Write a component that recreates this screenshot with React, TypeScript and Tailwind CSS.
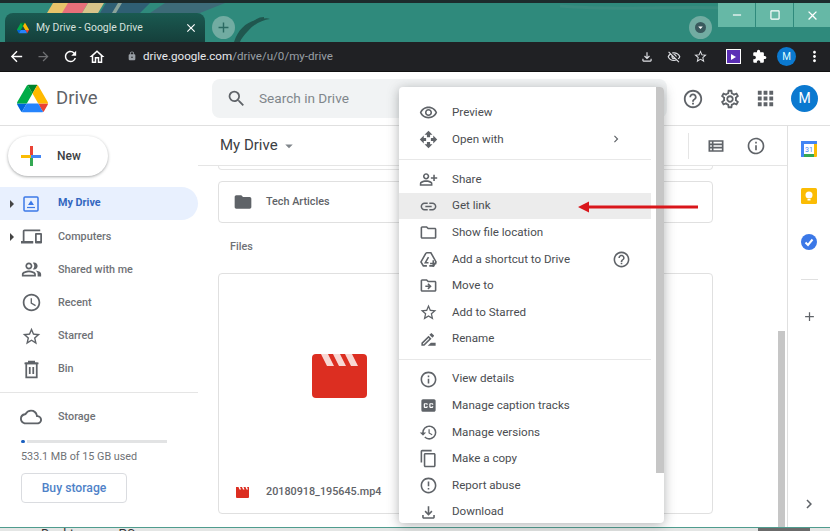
import {
  MdAccessTime, MdArrowBack, MdArrowForward, MdArrowDropDown, MdChevronRight, MdClose, MdContentCopy,
  MdErrorOutline, MdExtension, MdHelpOutline, MdHistory, MdInfoOutline, MdLink, MdLock, MdMoreVert,
  MdOpenWith, MdOutlineCloud, MdOutlineDevices, MdOutlineDriveFileMove, MdOutlineDriveFileRenameOutline,
  MdOutlineFileDownload, MdOutlineFolder, MdOutlineHome, MdOutlinePeopleAlt, MdOutlinePersonAddAlt,
  MdOutlineRemoveRedEye, MdOutlineSettings, MdOutlineViewList, MdRefresh, MdSearch, MdStarBorder,
  MdApps, MdClosedCaption, MdFolder, MdAdd, MdCropSquare, MdRemove, MdOutlineVisibilityOff,
} from "react-icons/md";
import type { IconType } from "react-icons";

function ShortcutIcon({ size = 19, className }: { size?: number; className?: string }) {
  return (
    <svg width={size} height={size} viewBox="0 0 24 24" fill="none" stroke="currentColor" strokeWidth="2" className={className}>
      <path d="M9 3.500H15L21.500 15L18.500 20H13" />
      <path d="M9 3.500L2.500 15L5.500 20H10" />
      <path d="M12 9L8 16H12" />
      <path d="M18 13V21M14 17H22" />
    </svg>
  );
}

function BinIcon({ size = 21, className }: { size?: number; className?: string }) {
  return (
    <svg width={size} height={size} viewBox="0 0 24 24" fill="none" stroke="currentColor" strokeWidth="2" className={className}>
      <path d="M4 5H20M9 5V3H15V5" />
      <rect x="6" y="5" width="12" height="16" />
      <path d="M10 9V17M14 9V17" />
    </svg>
  );
}

const menuGroups: { label: string; icon: IconType | typeof ShortcutIcon; extra?: "chevron" | "help"; active?: boolean }[][] = [
  [
    { label: "Preview", icon: MdOutlineRemoveRedEye },
    { label: "Open with", icon: MdOpenWith, extra: "chevron" },
  ],
  [
    { label: "Share", icon: MdOutlinePersonAddAlt },
    { label: "Get link", icon: MdLink, active: true },
    { label: "Show file location", icon: MdOutlineFolder },
    { label: "Add a shortcut to Drive", icon: ShortcutIcon, extra: "help" },
    { label: "Move to", icon: MdOutlineDriveFileMove },
    { label: "Add to Starred", icon: MdStarBorder },
    { label: "Rename", icon: MdOutlineDriveFileRenameOutline },
  ],
  [
    { label: "View details", icon: MdInfoOutline },
    { label: "Manage caption tracks", icon: MdClosedCaption },
    { label: "Manage versions", icon: MdHistory },
    { label: "Make a copy", icon: MdContentCopy },
    { label: "Report abuse", icon: MdErrorOutline },
    { label: "Download", icon: MdOutlineFileDownload },
  ],
];

const navItems: { label: string; icon: IconType | typeof BinIcon; caret?: boolean }[] = [
  { label: "Computers", icon: MdOutlineDevices, caret: true },
  { label: "Shared with me", icon: MdOutlinePeopleAlt },
  { label: "Recent", icon: MdAccessTime },
  { label: "Starred", icon: MdStarBorder },
  { label: "Bin", icon: BinIcon },
];

function DriveLogo({ size = 16 }: { size?: number }) {
  return (
    <svg width={size} height={size} viewBox="0 0 87.3 78">
      <path d="M6.6 66.85l3.85 6.65c.8 1.4 1.95 2.5 3.3 3.3L27.5 53H0c0 1.55.4 3.1 1.2 4.5z" fill="#0066da" />
      <path d="M43.65 25L29.9 1.2c-1.35.8-2.5 1.9-3.3 3.3L1.2 48.5C.4 49.9 0 51.45 0 53h27.5z" fill="#00ac47" />
      <path d="M73.55 76.8c1.35-.8 2.5-1.9 3.3-3.3l1.6-2.75L86.1 57.5c.8-1.4 1.2-2.95 1.2-4.5H59.8l5.85 11.5z" fill="#ea4335" />
      <path d="M43.65 25L57.4 1.2C56.05.4 54.5 0 52.9 0H34.4c-1.6 0-3.15.45-4.5 1.2z" fill="#00832d" />
      <path d="M59.8 53H27.5L13.75 76.8c1.35.8 2.9 1.2 4.5 1.2h50.8c1.6 0 3.15-.45 4.5-1.2z" fill="#2684fc" />
      <path d="M73.4 26.5L60.7 4.5c-.8-1.4-1.95-2.5-3.3-3.3L43.65 25 59.8 53h27.45c0-1.55-.4-3.1-1.2-4.5z" fill="#ffba00" />
    </svg>
  );
}

function TitleBarArt() {
  return (
    <svg className="absolute inset-0" width="830" height="39" viewBox="0 0 830 39">
      <path d="M47 10L53 0H72L66 10Z" fill="#e9c46a" />
      <path d="M62 10L68 0H88L82 10Z" fill="#e8707a" />
      <path d="M82 10L88 0H104L98 10Z" fill="#d8c48a" />
      <path d="M100 10L106 0H150L140 10Z" fill="#2f5f74" />
      <path d="M112 10L118 0H122L116 10Z" fill="#8aa39a" />
      <path d="M150 10L165 0H225L200 10Z" fill="#3d6b78" />
      <path d="M234 39C238 27 245 20 256 17C262 16 266 14 270 16C262 17 254 21 248 28C244 32 241 36 240 39Z" fill="#20574f" />
      <path d="M250 23C255 18 258 15 264 15" stroke="#20574f" strokeWidth="2" fill="none" />
      <path d="M560 3C620 8 680 3 720 5" stroke="#3a8d80" strokeWidth="3" fill="none" />
    </svg>
  );
}

function ChromeBar() {
  return (
    <div className="h-[39px] bg-[#2f8a7c] relative">
      <TitleBarArt />
      <div className="absolute left-[5px] top-[10px] w-[200px] h-[29px] bg-linear-to-b from-[#1a5a51] to-[#153f3b] rounded-t-lg flex items-center pl-[12px] pr-[7px] text-[#d6e2df]">
        <DriveLogo size={12} />
        <span className="ml-[7px] text-[10.4px] flex-1">My Drive - Google Drive</span>
        <MdClose size={14} className="text-white" />
      </div>
      <div className="absolute left-[212px] top-[13px] w-[23px] h-[23px] rounded-full bg-[#72aca2] flex items-center justify-center text-[#2a6a62]">
        <MdAdd size={17} />
      </div>
      <div className="absolute left-[689px] top-[13px] w-[23px] h-[23px] rounded-full bg-[#72aca2] flex items-center justify-center">
        <div className="w-[11px] h-[11px] rounded-full bg-[#3a5a5e] flex items-center justify-center">
          <MdArrowDropDown size={11} className="text-white" />
        </div>
      </div>
      <div className="absolute right-0 top-0 h-[24px] flex gap-px text-white">
        <div className="w-[37px] bg-[#66b8a6] flex items-center justify-center"><MdRemove size={14} /></div>
        <div className="w-[37px] bg-[#66b8a6] flex items-center justify-center"><MdCropSquare size={14} /></div>
        <div className="w-[36px] bg-[#66b8a6] flex items-center justify-center"><MdClose size={15} /></div>
      </div>
    </div>
  );
}

function Toolbar() {
  return (
    <div className="h-[30px] bg-[#202124] flex items-center border-b border-[#111]">
      <div className="flex items-center text-white">
        <MdArrowBack size={17} className="ml-[8px]" />
        <MdArrowForward size={15} className="ml-[11px] text-[#6f7073]" />
        <MdRefresh size={17} className="ml-[11px]" />
        <MdOutlineHome size={18} className="ml-[9px]" />
      </div>
      <div className="ml-[21px] flex items-center flex-1 text-[11.6px]">
        <MdLock size={10} className="text-[#9aa0a6]" />
        <span className="ml-[6px] text-[#e8eaed]">drive.google.com</span>
        <span className="text-[#9aa0a6]">/drive/u/0/my-drive</span>
      </div>
      <div className="flex items-center text-[#dfe1e5]">
        <MdOutlineFileDownload size={14} className="mr-[13px]" />
        <MdOutlineVisibilityOff size={14} className="mr-[12px]" />
        <MdStarBorder size={15} className="mr-[18px]" />
        <div className="w-[15px] h-[15px] bg-[#5b2fb5] border border-white flex items-center justify-center mr-[11px]">
          <div className="w-0 h-0 border-y-[3px] border-y-transparent border-l-[5px] border-l-white" />
        </div>
        <MdExtension size={15} className="text-white mr-[10px]" />
        <div className="w-[19px] h-[19px] rounded-full bg-[#0b79d0] text-[#dff] text-[10px] flex items-center justify-center mr-[10px]">M</div>
        <MdMoreVert size={17} className="text-white mr-[7px]" />
      </div>
    </div>
  );
}

function DriveHeader() {
  return (
    <div className="h-[54px] shrink-0 bg-white border-b border-[#e0e0e0] flex items-center">
      <div className="ml-[17px]"><DriveLogo size={31} /></div>
      <span className="ml-[8px] text-[18.5px] text-[#5f6368] w-[156px]">Drive</span>
      <div className="w-[455px] h-[39px] rounded-lg bg-[#f1f3f4] flex items-center pl-[14px] text-[#80868b] text-[13.6px]">
        <MdSearch size={21} className="text-[#5f6368]" />
        <span className="ml-[12px]">Search in Drive</span>
      </div>
      <MdHelpOutline size={22} className="ml-[15px] text-[#5f6368]" />
      <MdOutlineSettings size={22} className="ml-[15px] text-[#5f6368]" />
      <MdApps size={23} className="ml-[13px] text-[#5f6368]" />
      <div className="ml-[14px] w-[27px] h-[27px] rounded-full bg-[#0b79d0] text-white text-[14px] flex items-center justify-center">M</div>
    </div>
  );
}

function Sidebar() {
  return (
    <div className="w-[198px] shrink-0 flex flex-col">
      <div className="mt-[10px] ml-[8px] w-[100px] h-[40px] rounded-full bg-white shadow-[0_1px_3px_rgba(60,64,67,0.45)] flex items-center">
        <svg width="22" height="22" viewBox="0 0 22 22" className="ml-[12px]">
          <rect x="10" y="1" width="3" height="10" fill="#ea4335" />
          <rect x="10" y="11" width="3" height="10" fill="#34a853" />
          <rect x="1" y="10" width="10" height="3" fill="#fbbc04" />
          <rect x="11" y="10" width="10" height="3" fill="#4285f4" />
        </svg>
        <span className="ml-[15px] text-[12px] text-[#3c4043] font-medium">New</span>
      </div>
      <div className="mt-[11px] h-[33px] w-[198px] rounded-r-full bg-[#e8f0fe] flex items-center relative">
        <div className="ml-[10px] w-0 h-0 border-y-[4px] border-y-transparent border-l-[4px] border-l-[#444]" />
        <svg width="16" height="16" viewBox="0 0 16 16" className="ml-[9px]">
          <rect x="1" y="1" width="14" height="14" rx="1" fill="none" stroke="#3b78e7" strokeWidth="1.5" />
          <path d="M4 11.5H12" stroke="#3b78e7" strokeWidth="1.2" />
          <path d="M8 4.5L11 9H5Z" fill="#3b78e7" />
        </svg>
        <span className="ml-[19px] text-[10.8px] font-bold text-[#3367c0]">My Drive</span>
      </div>
      <div className="flex flex-col">
        {navItems.map((item) => (
          <div key={item.label} className="h-[33.2px] flex items-center relative">
            {item.caret && <div className="absolute left-[10px] w-0 h-0 border-y-[4px] border-y-transparent border-l-[4px] border-l-[#444]" />}
            <item.icon size={21} className="ml-[21px] text-[#5f6368]" />
            <span className="ml-[16px] text-[10.8px] font-medium text-[#6f7276]">{item.label}</span>
          </div>
        ))}
      </div>
      <div className="mt-[6px] border-t border-[#e5e5e5]" />
      <div className="mt-[12px] flex items-center h-[24px]">
        <MdOutlineCloud size={22} className="ml-[20px] text-[#5f6368]" />
        <span className="ml-[16px] text-[10.8px] font-medium text-[#6f7276]">Storage</span>
      </div>
      <div className="mt-[11px] ml-[21px] w-[146px] h-[3px] flex gap-[2px]">
        <div className="w-[4px] h-[3px] rounded-full bg-[#1a60c0]" />
        <div className="flex-1 bg-[#e2e3e4]" />
      </div>
      <span className="mt-[6px] ml-[21px] text-[10.8px] text-[#6f7276] leading-[16px]">533.1 MB of 15 GB used</span>
      <div className="mt-[8px] ml-[21px] w-[106px] h-[30px] border border-[#dadce0] rounded flex items-center justify-center text-[12.2px] font-medium text-[#4f82c8]">Buy storage</div>
    </div>
  );
}

function Content() {
  return (
    <div className="flex-1 flex flex-col relative">
      <div className="h-[40px] shrink-0 border-b border-[#e5e5e5] flex items-center pl-[22px] text-[#3c4043] pr-[21px]">
        <span className="text-[15px]">My Drive</span>
        <MdArrowDropDown size={18} className="ml-[2px] text-[#80868b]" />
        <div className="ml-auto h-[26px] border-l border-[#e5e5e5] mr-[17px]" />
        <MdOutlineViewList size={20} className="text-[#5f6368] mr-[20px]" />
        <MdInfoOutline size={20} className="text-[#5f6368]" />
      </div>
      <div className="flex-1 pl-[20px] pr-[2px] flex">
        <div className="w-[495px] flex flex-col">
          <div className="h-[4px] border border-t-0 border-[#e5e5e5] rounded-b" />
          <div className="mt-[11px] h-[42px] border border-[#e0e0e0] rounded flex items-center pl-[14px]">
            <MdFolder size={20} className="text-[#5f6368]" />
            <span className="ml-[13px] text-[10.8px] font-medium text-[#5f6368]">Tech Articles</span>
          </div>
          <span className="mt-[17px] ml-[12px] text-[10.8px] text-[#6f7276] font-medium leading-[14px]">Files</span>
          <div className="mt-[19px] h-[241px] border border-[#e0e0e0] rounded flex flex-col">
            <div className="flex-1 flex pt-[80px] pl-[93px]">
              <svg width="55" height="44" viewBox="0 0 55 44">
                <path d="M0 14L0 4a4 4 0 0 1 4-4H51a4 4 0 0 1 4 4V40a4 4 0 0 1-4 4H4a4 4 0 0 1-4-4Z" fill="#dc2e21" />
                <path d="M9 0h7l6 12h-7zM21 0h7l6 12h-7zM33 0h7l6 12h-7z" fill="#f8d8d4" />
              </svg>
            </div>
            <div className="h-[40px] flex items-center pl-[17px] mb-[1px]">
              <svg width="13" height="11" viewBox="0 0 13 11">
                <path d="M0 3H13V10a1 1 0 0 1-1 1H1a1 1 0 0 1-1-1Z M0 0H13V3H0Z" fill="#dc2e21" />
                <path d="M2.500 0h1.500l1 2.500h-1.500zM6 0h1.500l1 2.500h-1.500zM9.500 0h1.500l1 2.500h-1.500z" fill="#fff" />
              </svg>
              <span className="ml-[17px] text-[10.8px] font-medium text-[#5f6368]">20180918_195645.mp4</span>
            </div>
          </div>
        </div>
        <div className="ml-auto flex flex-col justify-end">
          <div className="w-[7px] h-[196px] bg-[#c6c6c6]" />
        </div>
      </div>
    </div>
  );
}

function RightRail() {
  return (
    <div className="w-[43px] shrink-0 border-l border-[#e0e0e0] flex flex-col items-center text-[#5f6368]">
      <svg width="16" height="16" viewBox="0 0 16 16" className="mt-[15px]">
        <rect width="16" height="16" rx="1" fill="#fbbc04" />
        <rect width="13" height="13" fill="#fff" />
        <rect width="16" height="3" fill="#4285f4" />
        <rect y="3" width="3" height="13" fill="#4285f4" />
        <rect x="3" y="13" width="10" height="3" fill="#34a853" />
        <text x="8" y="11" fontSize="7" textAnchor="middle" fill="#4285f4" fontFamily="Roboto, sans-serif">31</text>
      </svg>
      <svg width="16" height="16" viewBox="0 0 16 16" className="mt-[31px]">
        <rect width="16" height="16" rx="1.500" fill="#fbbc04" />
        <circle cx="8" cy="7" r="3.500" fill="#fff" />
        <rect x="6.500" y="11" width="3" height="1.500" fill="#fff" />
      </svg>
      <svg width="16" height="16" viewBox="0 0 16 16" className="mt-[30px]">
        <circle cx="8" cy="8" r="8" fill="#3b78e7" />
        <path d="M4.500 8.500L7 11L11.500 5.500" stroke="#fff" strokeWidth="2" fill="none" />
      </svg>
      <div className="mt-[29px] w-[17px] border-t border-[#e0e0e0]" />
      <MdAdd size={15} className="mt-[29px]" />
      <MdChevronRight size={18} className="mt-auto mb-[14px]" />
    </div>
  );
}

function ContextMenu() {
  return (
    <div className="absolute left-[399px] top-[87px] w-[265px] h-[436px] bg-white rounded shadow-[0_2px_12px_rgba(60,64,67,0.4)] overflow-hidden pt-[12.5px]">
      <div className="absolute right-0 top-0 w-[8px] h-[386px] bg-[#c6c6c6]" />
      {menuGroups.map((group, i) => (
        <div key={i} className={i > 0 ? "mt-[6.5px] border-t border-[#e8e8e8] pt-[6px] mr-[13px]" : "mr-[13px]"}>
          {group.map((item) => (
            <div key={item.label} className={`h-[26.6px] flex items-center ${item.active ? "bg-[#ececec]" : ""}`}>
              <item.icon size={19} className="ml-[20px] text-[#5f6368] shrink-0" />
              <span className="ml-[14px] text-[11.6px] text-[#4a4d51]">{item.label}</span>
              {item.extra === "chevron" && <MdChevronRight size={14} className="ml-auto mr-[28px] text-[#5f6368]" />}
              {item.extra === "help" && <MdHelpOutline size={19} className="ml-auto mr-[20px] text-[#5f6368]" />}
            </div>
          ))}
        </div>
      ))}
    </div>
  );
}

export default function App() {
  return (
    <div className="w-[830px] h-[531px] overflow-hidden relative bg-white flex flex-col font-['Roboto',sans-serif]">
      <div className="h-[3px] shrink-0 bg-[#1c2b2c]" />
      <ChromeBar />
      <Toolbar />
      <DriveHeader />
      <div className="flex-1 flex min-h-0">
        <Sidebar />
        <Content />
        <RightRail />
      </div>
      {/* sliver of the window behind */}
      <div className="h-[4px] shrink-0 bg-[#e4e6e5] border-t border-[#4f9c8e] overflow-hidden flex items-start pl-[41px] text-[13px] leading-[14px] text-[#333]">
        <span className="-mt-[1px]">Desktop</span>
        <span className="-mt-[1px] ml-[30px]">PC</span>
        <div className="ml-auto mr-[20px] w-[52px] h-[3px] bg-[#6b6b6b]" />
      </div>
      <ContextMenu />
      {/* red arrow pointing at Get link */}
      <svg className="absolute left-[578px] top-[200px]" width="122" height="14" viewBox="0 0 122 14">
        <path d="M0 7L11 1.500V5.500H120V8.500H11V12.500Z" fill="#d9161b" />
      </svg>
    </div>
  );
}
